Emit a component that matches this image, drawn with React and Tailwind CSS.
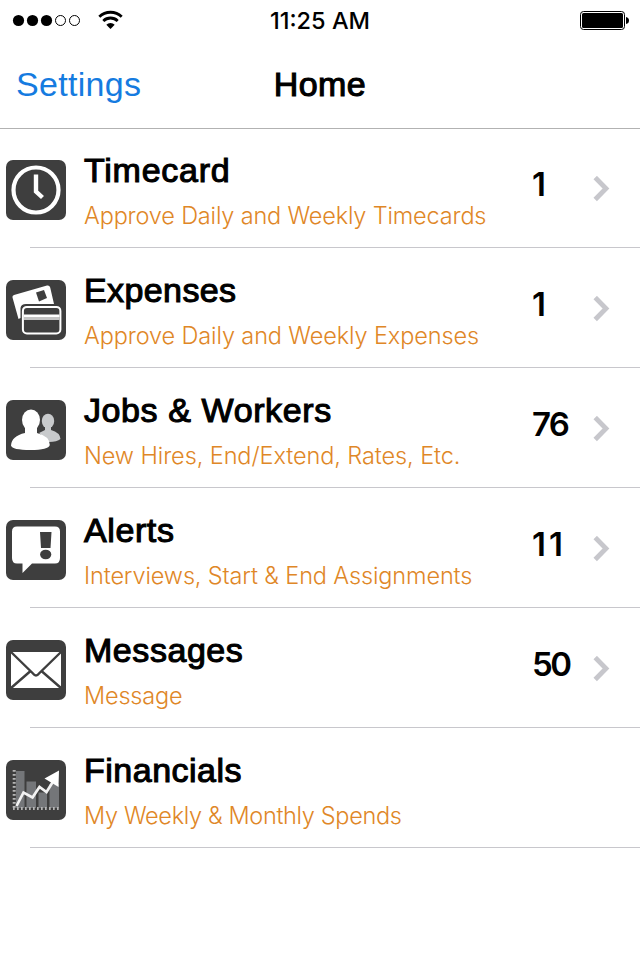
import React from "react";

function Tile({ children }) {
  return (
    <svg className="mt-8 ml-1.5 h-[60px] w-[60px] shrink-0" viewBox="0 0 60 60" fill="none">
      <rect width="60" height="60" rx="7" fill="#3e3e3e" />
      {children}
    </svg>
  );
}

const ClockIcon = () => (
  <Tile>
    <circle cx="30" cy="30" r="22.5" stroke="#fff" strokeWidth="4.2" />
    <path d="M30 14.5V31.5L36.5 37.5" stroke="#fff" strokeWidth="4.4" />
  </Tile>
);

const CardsIcon = () => (
  <Tile>
    <path d="M6.500 17.500Q6 15.500 8 14.900L41 5.500Q43.500 5 44.200 7.500L48 24H20Q15 24 14.500 28V38L12.500 39Z" fill="#fff" />
    <path d="M30 12.500L38 10L41 18L33 21.500Z" fill="#3e3e3e" />
    <rect x="16.900" y="26.900" width="37.500" height="26.500" rx="4" fill="#3e3e3e" stroke="#fff" strokeWidth="2" />
    <path d="M18 34.500H53.500V37H18Z" fill="#fff" />
    <path d="M18 37H53.500V40H18Z" fill="#c4c4c4" />
  </Tile>
);

const PeopleIcon = () => (
  <Tile>
    <ellipse cx="42" cy="21" rx="6.200" ry="7.300" fill="#c8cacc" />
    <path d="M39 25H45V30Q54 32.500 54.500 39Q51 42 43 42L33 33L39 30Z" fill="#c8cacc" />
    <ellipse cx="25" cy="20" rx="9" ry="10.500" fill="#fff" />
    <path d="M19 26H31V33Q43.500 36 43.800 45Q42.500 50 24.500 50Q6 50 5 45.500Q5.500 36 19 33Z" fill="#fff" />
  </Tile>
);

const AlertIcon = () => (
  <Tile>
    <path d="M11 6.500H49Q54 6.500 54 11.500V38Q54 43.500 49 43.500H26L16.500 53V43.500H11Q6 43.500 6 38V11.500Q6 6.500 11 6.500Z" fill="#fff" />
    <path d="M34 12H45.500L44.500 28H35Z" fill="#3e3e3e" />
    <ellipse cx="39.700" cy="34.500" rx="5.600" ry="4.800" fill="#3e3e3e" />
  </Tile>
);

const MailIcon = () => (
  <Tile>
    <rect x="5" y="12" width="50" height="36" fill="#fff" />
    <path d="M5 12L27 33.500Q30 37.500 33 33.500L55 12M5 48L24 31.500M55 48L36 31.500" stroke="#3e3e3e" strokeWidth="2.400" />
  </Tile>
);

const ChartIcon = () => (
  <Tile>
    <path d="M10 11H18.500V48H10ZM20.500 21.500H30V48H20.500ZM32.500 32.500H41V48H32.500ZM43.500 24H53V48H43.500Z" fill="#747679" />
    <path d="M8.200 10V48" stroke="#b5b5b5" strokeWidth="3" strokeDasharray="1.700 2.300" />
    <path d="M7 48.500H54" stroke="#b5b5b5" strokeWidth="3" strokeDasharray="1.700 2.300" />
    <path d="M10.500 46L17.500 32.500L26.500 37.500L33.500 27L40.500 32L48 20" stroke="#f2f2f2" strokeWidth="2.700" />
    <path d="M53 10.500L38.500 18.500L52.500 27Z" fill="#fff" />
  </Tile>
);

const items = [
  { icon: ClockIcon, title: "Timecard", titleFit: "tracking-[0.75px]", sub: "Approve Daily and Weekly Timecards", subFit: "tracking-[-0.17px]", count: "1" },
  { icon: CardsIcon, title: "Expenses", titleFit: "tracking-[0.4px]", sub: "Approve Daily and Weekly Expenses", subFit: "tracking-[-0.12px]", count: "1" },
  { icon: PeopleIcon, title: "Jobs & Workers", titleFit: "tracking-[0.6px]", sub: "New Hires, End/Extend, Rates, Etc.", subFit: "tracking-[-0.09px]", count: "76", countFit: "tracking-[-1.8px]" },
  { icon: AlertIcon, title: "Alerts", titleFit: "tracking-[0.6px]", sub: "Interviews, Start & End Assignments", subFit: "tracking-[-0.14px]", count: "11", countFit: "tracking-[3px]" },
  { icon: MailIcon, title: "Messages", titleFit: "tracking-[0.55px]", sub: "Message", subFit: "tracking-[-0.2px]", count: "50", countFit: "tracking-[-2.5px]" },
  { icon: ChartIcon, title: "Financials", titleFit: "tracking-[0.5px]", sub: "My Weekly & Monthly Spends", subFit: "tracking-[-0.34px]" },
];

function StatusBar() {
  return (
    <div className="grid h-10 grid-cols-3 items-center">
      <svg className="h-10 w-[140px]" viewBox="0 0 140 40" fill="none">
        <circle cx="18.500" cy="20.500" r="5.600" fill="#000" />
        <circle cx="32.500" cy="20.500" r="5.600" fill="#000" />
        <circle cx="46.500" cy="20.500" r="5.600" fill="#000" />
        <circle cx="60.500" cy="20.500" r="5" stroke="#000" />
        <circle cx="74.500" cy="20.500" r="5" stroke="#000" />
        <path d="M99.300 16.700A16.300 16.300 0 0 1 121.700 16.700M103.300 20.900A10.400 10.400 0 0 1 117.700 20.900" stroke="#000" strokeWidth="2.800" />
        <path d="M110.500 29L106.300 24.700A6 6 0 0 1 114.700 24.700Z" fill="#000" />
      </svg>
      <div className="pt-px text-center font-['Inter'] text-[23.500px] leading-none font-medium whitespace-nowrap">11:25 AM</div>
      <svg className="h-10 w-[64px] justify-self-end" viewBox="0 0 64 40" fill="none">
        <rect x="4.500" y="11.500" width="44" height="18" rx="3" stroke="#000" />
        <rect x="6" y="13" width="41" height="15" rx="1.500" fill="#000" />
        <path d="M50 17Q53 17.500 53 20.500T50 24Z" fill="#000" />
      </svg>
    </div>
  );
}

function Row({ item }) {
  const Icon = item.icon;
  return (
    <li className="h-[120px]">
      <div className="flex h-[119px]">
        <Icon />
        <div className="ml-[18px] flex-1 whitespace-nowrap">
          <div className={`mt-[22px] text-[34px] leading-[40px] [-webkit-text-stroke:1.1px_black] ${item.titleFit}`}>{item.title}</div>
          <div className={`mt-[11px] font-['Inter'] text-[23.500px] leading-[30px] font-light text-[#df8727] ${item.subFit}`}>{item.sub}</div>
        </div>
        {item.count && (
          <div className="flex w-[108px]">
            <div className={`mt-[36px] w-[61px] font-['Inter'] text-[33px] leading-[40px] font-semibold ${item.countFit ?? ""}`}>{item.count}</div>
            <svg className="mt-12 h-[26px] w-[18px]" viewBox="0 0 18 26" fill="none">
              <path d="M2.200 1.500L13 12.500L2.200 23.500" stroke="#c7c7cc" strokeWidth="4.800" />
            </svg>
          </div>
        )}
      </div>
      <div className="ml-[30px] h-px bg-[#c8c7cc]" />
    </li>
  );
}

export default function App() {
  return (
    <div className="h-[960px] w-[640px] overflow-hidden bg-white font-['Liberation_Sans',sans-serif] text-black">
      <header className="h-[129px] border-b border-[#b2b2b2]">
        <StatusBar />
        <div className="grid h-[88px] grid-cols-3 items-center text-[34px] leading-none">
          <div className="pl-4 tracking-[0.3px] text-[#157be0]">Settings</div>
          <div className="text-center tracking-[0.4px] [-webkit-text-stroke:1.1px_black]">Home</div>
        </div>
      </header>
      <ul className="-mt-px">
        {items.map((item) => (
          <Row key={item.title} item={item} />
        ))}
      </ul>
    </div>
  );
}
